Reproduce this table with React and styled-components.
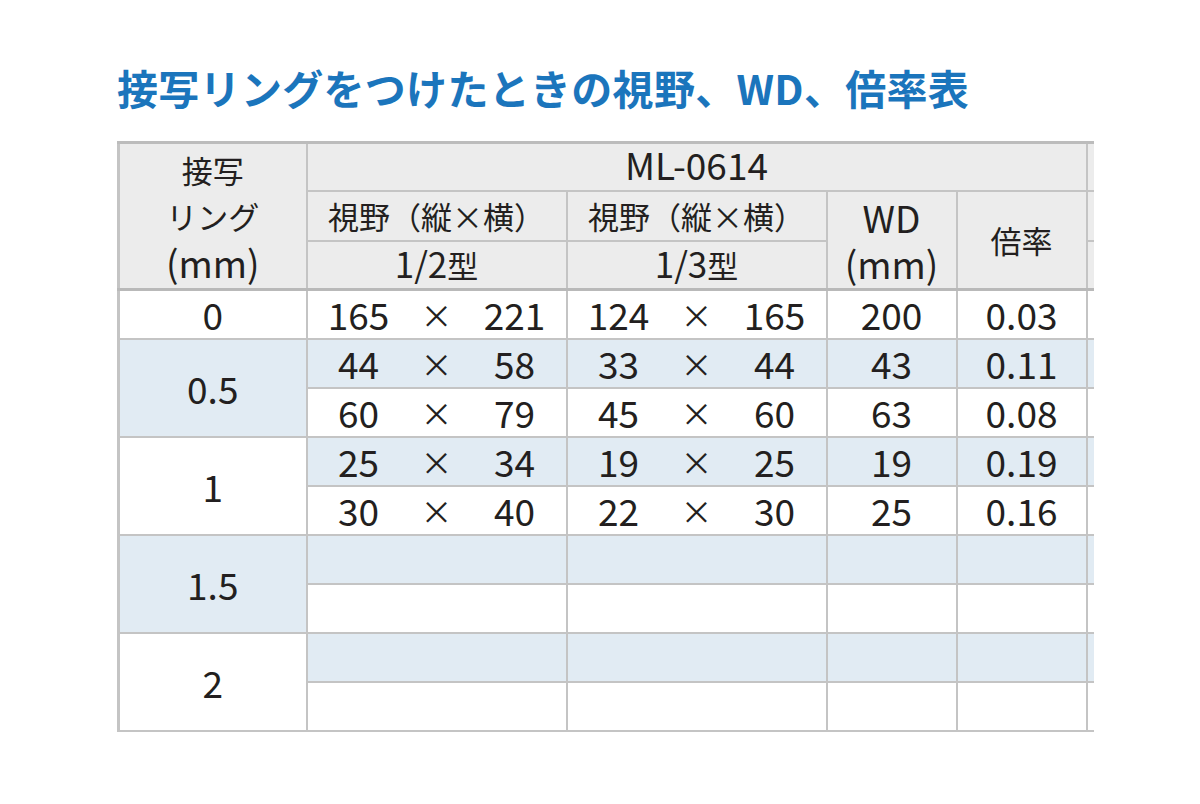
import React from "react";
import styled, { createGlobalStyle } from "styled-components";

const Global = createGlobalStyle`
  html, body { margin: 0; padding: 0; background: #ffffff; }
  body { font-family: "Noto Sans CJK JP", "Noto Sans", sans-serif; color: #231f20; }
`;

const Page = styled.div`
  width: 1200px;
  height: 804px;
  box-sizing: border-box;
  padding: 64px 0 0 117px;
  background: #ffffff;
  overflow: hidden;
`;

const Title = styled.h1`
  margin: 0 0 30px 0;
  font-family: "Noto Sans CJK JP", sans-serif;
  font-weight: 700;
  font-size: 41px;
  line-height: 47px;
  letter-spacing: 0.3px;
  color: #1b75bc;
  white-space: nowrap;
`;

const Clip = styled.div`
  width: 977px;
  overflow: hidden;
`;

const Table = styled.table`
  border-collapse: collapse;
  table-layout: fixed;
  width: 1100px;
  border-top: 3px solid #bcbcbc;
  border-left: 3px solid #c4c4c4;
`;

const Col = styled.col`
  width: ${(p) => p.$w}px;
`;

const Row = styled.tr`
  height: ${(p) => p.$h}px;
`;

const HeadCell = styled.td`
  background: #ececec;
  border: 2px solid #c4c4c4;
  border-bottom-width: ${(p) => (p.$last ? 3 : 2)}px;
  border-bottom-color: ${(p) => (p.$last ? "#b9b9b9" : "#c4c4c4")};
  padding: 0;
  text-align: center;
  vertical-align: middle;
  font-size: 31px;
  line-height: 42px;
  color: #231f20;
  white-space: nowrap;
`;

const Line = styled.div`
  height: ${(p) => p.$h || 46}px;
  line-height: ${(p) => p.$h || 46}px;
  font-size: ${(p) => (p.$latin ? 37 : 31)}px;
`;

const Cell = styled.td`
  background: ${(p) => (p.$blue ? "#e1ebf3" : "#ffffff")};
  border: 2px solid #c4c4c4;
  padding: 0;
  text-align: center;
  vertical-align: middle;
  font-size: 37px;
  line-height: 44px;
  color: #231f20;
  white-space: nowrap;
`;

const Dim = styled.div`
  display: grid;
  grid-template-columns: 1fr 1fr 1fr;
  padding: 0 12px;
  align-items: center;
`;

const Num = styled.span`
  text-align: center;
`;

const Times = styled.span`
  text-align: center;
  font-size: 32px;
  font-weight: 400;
`;

const Latin = styled.span`
  font-size: ${(p) => p.$size || 37}px;
  line-height: 1;
`;

const groups = [
  { ring: "0", rows: [["165", "221", "124", "165", "200", "0.03"]] },
  {
    ring: "0.5",
    rows: [
      ["44", "58", "33", "44", "43", "0.11"],
      ["60", "79", "45", "60", "63", "0.08"],
    ],
  },
  {
    ring: "1",
    rows: [
      ["25", "34", "19", "25", "19", "0.19"],
      ["30", "40", "22", "30", "25", "0.16"],
    ],
  },
  { ring: "1.5", rows: [null, null] },
  { ring: "2", rows: [null, null] },
];

const DimCell = ({ a, b, blue }) => (
  <Cell $blue={blue}>
    {a ? (
      <Dim>
        <Num>{a}</Num>
        <Times>×</Times>
        <Num>{b}</Num>
      </Dim>
    ) : null}
  </Cell>
);

export default function App() {
  return (
    <Page>
      <Global />
      <Title>接写リングをつけたときの視野、WD、倍率表</Title>
      <Clip>
        <Table>
          <colgroup>
            <Col $w={188} />
            <Col $w={260} />
            <Col $w={260} />
            <Col $w={130} />
            <Col $w={130} />
            <Col $w={130} />
          </colgroup>
          <tbody>
            <Row $h={48}>
              <HeadCell rowSpan={3} $last>
                <Line>接写</Line>
                <Line>リング</Line>
                <Line $latin>(mm)</Line>
              </HeadCell>
              <HeadCell colSpan={4}>
                <Latin>ML-0614</Latin>
              </HeadCell>
              <HeadCell />
            </Row>
            <Row $h={50}>
              <HeadCell>視野（縦×横）</HeadCell>
              <HeadCell>視野（縦×横）</HeadCell>
              <HeadCell rowSpan={2} $last>
                <Line $latin>WD</Line>
                <Line $latin>(mm)</Line>
              </HeadCell>
              <HeadCell rowSpan={2} $last>
                倍率
              </HeadCell>
              <HeadCell />
            </Row>
            <Row $h={49}>
              <HeadCell $last>
                <Latin $size={35}>1/2</Latin>型
              </HeadCell>
              <HeadCell $last>
                <Latin $size={35}>1/3</Latin>型
              </HeadCell>
              <HeadCell $last />
            </Row>
            {groups.map((g) =>
              g.rows.map((r, i) => {
                const blue = g.rows.length > 1 && i === 0;
                const groupBlue = g.ring === "0.5" || g.ring === "1.5";
                return (
                  <Row key={g.ring + i} $h={49}>
                    {i === 0 && (
                      <Cell rowSpan={g.rows.length} $blue={groupBlue}>
                        {g.ring}
                      </Cell>
                    )}
                    <DimCell a={r && r[0]} b={r && r[1]} blue={blue} />
                    <DimCell a={r && r[2]} b={r && r[3]} blue={blue} />
                    <Cell $blue={blue}>{r && r[4]}</Cell>
                    <Cell $blue={blue}>{r && r[5]}</Cell>
                    <Cell $blue={blue} />
                  </Row>
                );
              })
            )}
          </tbody>
        </Table>
      </Clip>
    </Page>
  );
}
